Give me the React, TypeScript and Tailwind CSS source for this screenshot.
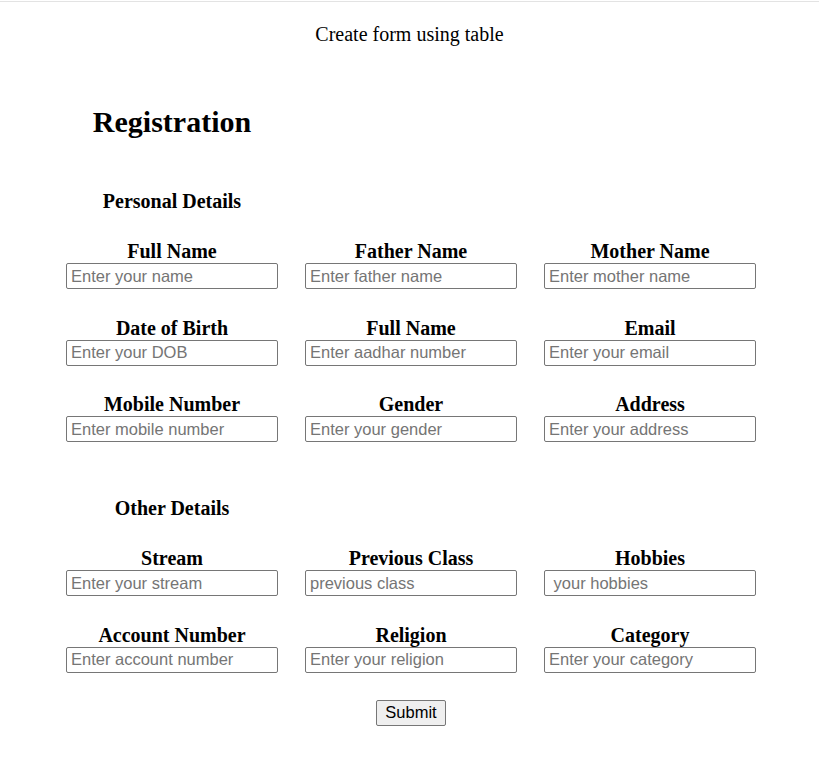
const serif = "font-['Liberation_Serif',serif]";

type Field = { label: string; placeholder: string };

const personal: Field[] = [
  { label: "Full Name", placeholder: "Enter your name" },
  { label: "Father Name", placeholder: "Enter father name" },
  { label: "Mother Name", placeholder: "Enter mother name" },
  { label: "Date of Birth", placeholder: "Enter your DOB" },
  { label: "Full Name", placeholder: "Enter aadhar number" },
  { label: "Email", placeholder: "Enter your email" },
  { label: "Mobile Number", placeholder: "Enter mobile number" },
  { label: "Gender", placeholder: "Enter your gender" },
  { label: "Address", placeholder: "Enter your address" },
];

const other: Field[] = [
  { label: "Stream", placeholder: "Enter your stream" },
  { label: "Previous Class", placeholder: "previous class" },
  { label: "Hobbies", placeholder: " your hobbies" },
  { label: "Account Number", placeholder: "Enter account number" },
  { label: "Religion", placeholder: "Enter your religion" },
  { label: "Category", placeholder: "Enter your category" },
];

function FieldGrid({ fields }: { fields: Field[] }) {
  return (
    <div className="grid grid-cols-[212px_212px_212px] gap-x-[27px] gap-y-[27.5px]">
      {fields.map((f, i) => (
        <div key={i} className="flex flex-col">
          <label className={`${serif} text-[20px] leading-[22px] font-bold text-center text-black`}>
            {f.label}
          </label>
          <input
            type="text"
            placeholder={f.placeholder}
            className="mt-px h-[26px] w-[212px] border border-[#767676] rounded-[2px] px-[4px] font-['Liberation_Sans',Arial,sans-serif] text-[16.5px] leading-[20px] text-black placeholder:text-[#757575] outline-none bg-white"
          />
        </div>
      ))}
    </div>
  );
}

export default function App() {
  return (
    <div className="min-h-[767px] bg-white">
      <div className="mt-px h-px bg-[#e3e3e3]" />
      <p className={`${serif} mt-[21px] text-center text-[20px] leading-[23px] text-black`}>
        Create form using table
      </p>

      <form className="ml-[66px] w-[690px]">
        <div className="w-[212px] mt-[57px]">
          <h1 className={`${serif} text-center text-[30px] leading-[37px] font-bold text-black`}>
            Registration
          </h1>
          <h3 className={`${serif} mt-[50px] text-center text-[20px] leading-[23px] font-bold text-black`}>
            Personal Details
          </h3>
        </div>
        <div className="mt-[27px]">
          <FieldGrid fields={personal} />
        </div>

        <div className="w-[212px] mt-[55px]">
          <h3 className={`${serif} text-center text-[20px] leading-[23px] font-bold text-black`}>
            Other Details
          </h3>
        </div>
        <div className="mt-[27px]">
          <FieldGrid fields={other} />
        </div>

        <div className="mt-[27px] flex justify-center">
          <button
            type="submit"
            className="h-[26px] w-[70px] border border-[#767676] rounded-[2px] bg-[#efefef] font-['Liberation_Sans',Arial,sans-serif] text-[16.5px] leading-none text-black"
          >
            Submit
          </button>
        </div>
      </form>
    </div>
  );
}
